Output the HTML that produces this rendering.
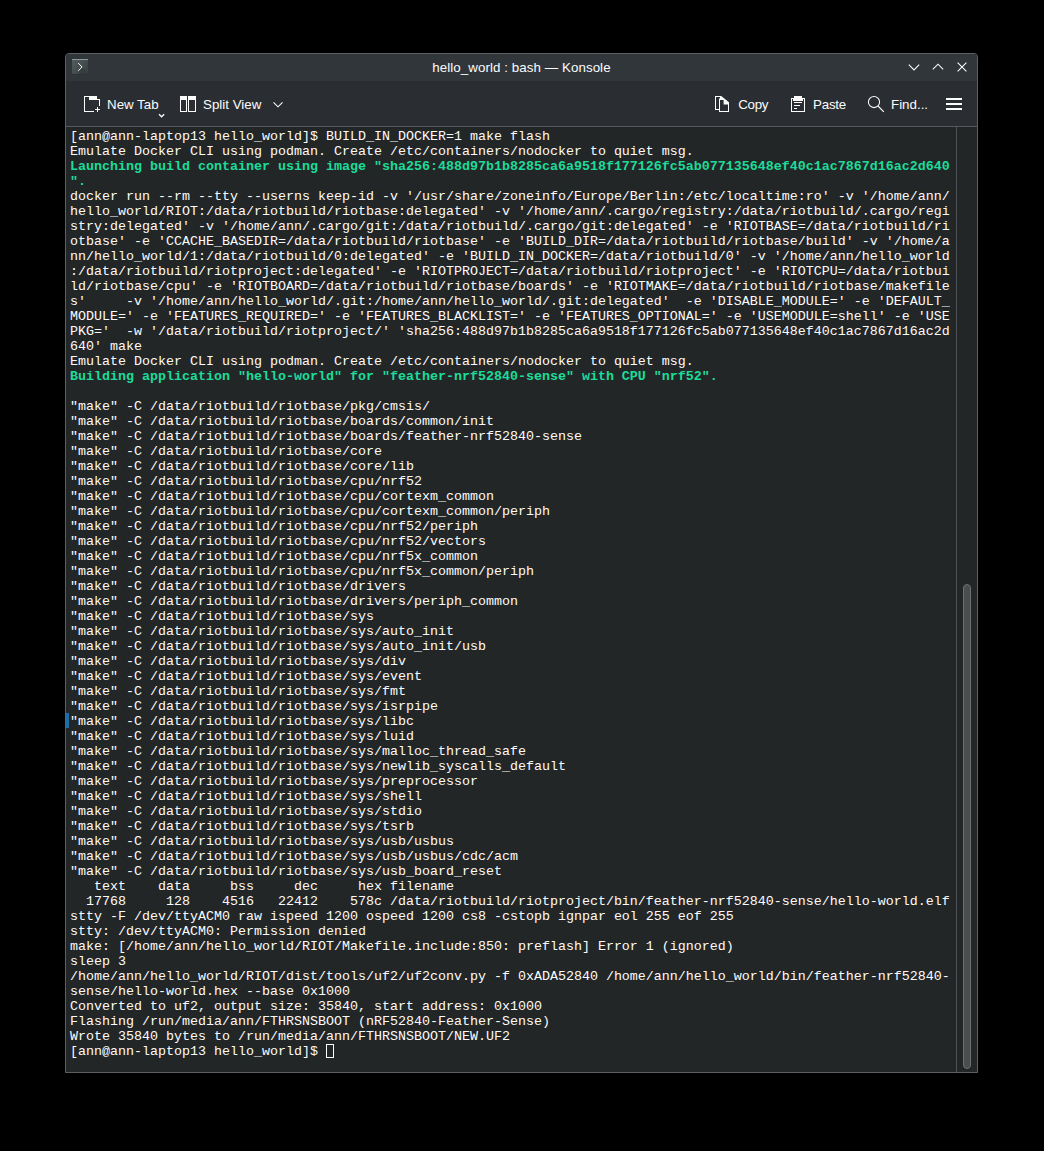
<!DOCTYPE html>
<html><head><meta charset="utf-8"><title>hello_world : bash — Konsole</title>
<style>
html,body{margin:0;padding:0;background:#000;}
body{width:1044px;height:1151px;position:relative;overflow:hidden;font-family:"Liberation Sans",sans-serif;}
#win{position:absolute;left:65px;top:53px;width:911px;height:1018px;border:1px solid #5c6064;border-radius:4px 4px 0 0;background:#232627;overflow:hidden;}
#tb{position:absolute;left:0;top:0;width:911px;height:27px;background:#31363b;}
#tool{position:absolute;left:0;top:27px;width:911px;height:45px;background:#2a2e32;border-bottom:1px solid #565a5e;}
.lbl{position:absolute;color:#fcfcfc;font-size:13.33px;line-height:16px;white-space:pre;}
#title{left:0;width:911px;text-align:center;top:6px;letter-spacing:0.07px;}
#term{position:absolute;left:4px;top:75px;margin:0;font-family:"Liberation Mono",monospace;font-size:13.333px;line-height:15px;color:#fcfcfc;white-space:pre;}
#term b{color:#1cdc9a;font-weight:bold;}
#sbline{position:absolute;left:890px;top:73px;width:1px;height:945px;background:#4f5357;}
#thumb{position:absolute;left:897px;top:530px;width:6px;height:483px;border:1px solid #6d7073;background:#4b4d4f;border-radius:4px;}
#mark{position:absolute;left:0;top:659px;width:3px;height:15px;background:#1e6da6;}
#cur{position:absolute;left:260px;top:990px;width:6px;height:12px;border:1px solid #fcfcfc;}
svg{position:absolute;overflow:visible;}
</style></head><body>
<div id="win">
 <div id="tb">
  <div class="lbl" id="title">hello_world : bash — Konsole</div>
 </div>
 <div id="tool">
  <div class="lbl" id="l1" style="left:41px;top:16px;">New Tab</div>
  <div class="lbl" id="l2" style="left:137px;top:16px;">Split View</div>
  <div class="lbl" id="l3" style="left:672.3px;top:16px;letter-spacing:-0.3px;">Copy</div>
  <div class="lbl" id="l4" style="left:747px;top:16px;letter-spacing:-0.2px;">Paste</div>
  <div class="lbl" id="l5" style="left:825px;top:16px;">Find...</div>
 </div>
 <pre id="term">[ann@ann-laptop13 hello_world]$ BUILD_IN_DOCKER=1 make flash
Emulate Docker CLI using podman. Create /etc/containers/nodocker to quiet msg.
<b>Launching build container using image "sha256:488d97b1b8285ca6a9518f177126fc5ab077135648ef40c1ac7867d16ac2d640</b>
<b>".</b>
docker run --rm --tty --userns keep-id -v '/usr/share/zoneinfo/Europe/Berlin:/etc/localtime:ro' -v '/home/ann/
hello_world/RIOT:/data/riotbuild/riotbase:delegated' -v '/home/ann/.cargo/registry:/data/riotbuild/.cargo/regi
stry:delegated' -v '/home/ann/.cargo/git:/data/riotbuild/.cargo/git:delegated' -e 'RIOTBASE=/data/riotbuild/ri
otbase' -e 'CCACHE_BASEDIR=/data/riotbuild/riotbase' -e 'BUILD_DIR=/data/riotbuild/riotbase/build' -v '/home/a
nn/hello_world/1:/data/riotbuild/0:delegated' -e 'BUILD_IN_DOCKER=/data/riotbuild/0' -v '/home/ann/hello_world
:/data/riotbuild/riotproject:delegated' -e 'RIOTPROJECT=/data/riotbuild/riotproject' -e 'RIOTCPU=/data/riotbui
ld/riotbase/cpu' -e 'RIOTBOARD=/data/riotbuild/riotbase/boards' -e 'RIOTMAKE=/data/riotbuild/riotbase/makefile
s'     -v '/home/ann/hello_world/.git:/home/ann/hello_world/.git:delegated'  -e 'DISABLE_MODULE=' -e 'DEFAULT_
MODULE=' -e 'FEATURES_REQUIRED=' -e 'FEATURES_BLACKLIST=' -e 'FEATURES_OPTIONAL=' -e 'USEMODULE=shell' -e 'USE
PKG='  -w '/data/riotbuild/riotproject/' 'sha256:488d97b1b8285ca6a9518f177126fc5ab077135648ef40c1ac7867d16ac2d
640' make
Emulate Docker CLI using podman. Create /etc/containers/nodocker to quiet msg.
<b>Building application "hello-world" for "feather-nrf52840-sense" with CPU "nrf52".</b>

"make" -C /data/riotbuild/riotbase/pkg/cmsis/
"make" -C /data/riotbuild/riotbase/boards/common/init
"make" -C /data/riotbuild/riotbase/boards/feather-nrf52840-sense
"make" -C /data/riotbuild/riotbase/core
"make" -C /data/riotbuild/riotbase/core/lib
"make" -C /data/riotbuild/riotbase/cpu/nrf52
"make" -C /data/riotbuild/riotbase/cpu/cortexm_common
"make" -C /data/riotbuild/riotbase/cpu/cortexm_common/periph
"make" -C /data/riotbuild/riotbase/cpu/nrf52/periph
"make" -C /data/riotbuild/riotbase/cpu/nrf52/vectors
"make" -C /data/riotbuild/riotbase/cpu/nrf5x_common
"make" -C /data/riotbuild/riotbase/cpu/nrf5x_common/periph
"make" -C /data/riotbuild/riotbase/drivers
"make" -C /data/riotbuild/riotbase/drivers/periph_common
"make" -C /data/riotbuild/riotbase/sys
"make" -C /data/riotbuild/riotbase/sys/auto_init
"make" -C /data/riotbuild/riotbase/sys/auto_init/usb
"make" -C /data/riotbuild/riotbase/sys/div
"make" -C /data/riotbuild/riotbase/sys/event
"make" -C /data/riotbuild/riotbase/sys/fmt
"make" -C /data/riotbuild/riotbase/sys/isrpipe
"make" -C /data/riotbuild/riotbase/sys/libc
"make" -C /data/riotbuild/riotbase/sys/luid
"make" -C /data/riotbuild/riotbase/sys/malloc_thread_safe
"make" -C /data/riotbuild/riotbase/sys/newlib_syscalls_default
"make" -C /data/riotbuild/riotbase/sys/preprocessor
"make" -C /data/riotbuild/riotbase/sys/shell
"make" -C /data/riotbuild/riotbase/sys/stdio
"make" -C /data/riotbuild/riotbase/sys/tsrb
"make" -C /data/riotbuild/riotbase/sys/usb/usbus
"make" -C /data/riotbuild/riotbase/sys/usb/usbus/cdc/acm
"make" -C /data/riotbuild/riotbase/sys/usb_board_reset
   text    data     bss     dec     hex filename
  17768     128    4516   22412    578c /data/riotbuild/riotproject/bin/feather-nrf52840-sense/hello-world.elf
stty -F /dev/ttyACM0 raw ispeed 1200 ospeed 1200 cs8 -cstopb ignpar eol 255 eof 255
stty: /dev/ttyACM0: Permission denied
make: [/home/ann/hello_world/RIOT/Makefile.include:850: preflash] Error 1 (ignored)
sleep 3
/home/ann/hello_world/RIOT/dist/tools/uf2/uf2conv.py -f 0xADA52840 /home/ann/hello_world/bin/feather-nrf52840-
sense/hello-world.hex --base 0x1000
Converted to uf2, output size: 35840, start address: 0x1000
Flashing /run/media/ann/FTHRSNSBOOT (nRF52840-Feather-Sense)
Wrote 35840 bytes to /run/media/ann/FTHRSNSBOOT/NEW.UF2
[ann@ann-laptop13 hello_world]$ </pre>
 <div id="sbline"></div>
 <div id="thumb"></div>
 <div id="mark"></div>
 <div id="cur"></div>
</div>
<svg id="ico" width="1044" height="1151" viewBox="0 0 1044 1151" style="left:0;top:0;">
 <defs>
  <linearGradient id="kg" x1="0" y1="0" x2="1" y2="1"><stop offset="0" stop-color="#525d5e"/><stop offset="1" stop-color="#363f40"/></linearGradient>
 </defs>
 <!-- konsole app icon -->
 <rect x="72" y="59" width="16" height="16" fill="url(#kg)"/>
 <polygon points="82,67 88,73 88,75 80,75 78,71" fill="#2f3738" opacity="0.55"/>
 <rect x="72" y="59" width="16" height="1" fill="#8c9a9b"/>
 <rect x="72" y="74" width="16" height="1" fill="#2b3233"/>
 <polyline points="78.2,63.1 82.1,67 78.2,70.9" fill="none" stroke="#fcfcfc" stroke-width="1"/>
 <!-- window buttons -->
 <g fill="none" stroke="#fcfcfc" stroke-width="1.05">
  <polyline points="908.8,64.7 914,69.9 919.2,64.7"/>
  <polyline points="932.8,69.4 938,64.2 943.2,69.4"/>
  <path d="M957.6,62.6 L966.4,71.4 M966.4,62.6 L957.6,71.4"/>
 </g>
 <!-- new tab -->
 <g fill="#fcfcfc">
  <rect x="84" y="96" width="1" height="16"/>
  <rect x="84" y="96" width="13" height="1"/>
  <rect x="84" y="111" width="10" height="1"/>
  <rect x="89" y="96" width="8" height="4"/>
  <rect x="97" y="99" width="3" height="1"/>
  <rect x="99" y="99" width="1" height="7"/>
  <rect x="95" y="109" width="5" height="1"/>
  <rect x="97" y="107" width="1" height="5"/>
 </g>
 <polyline points="159,114.2 161.6,116.8 164.2,114.2" fill="none" stroke="#fcfcfc" stroke-width="1.25"/>
 <!-- split view -->
 <path fill="#fcfcfc" fill-rule="evenodd" d="M180,96H187V112H180Z M181,100H186V111H181Z M188,96H196V112H188Z M189,100H195V111H189Z"/>
 <polyline points="273.5,102.3 278,106.8 282.5,102.3" fill="none" stroke="#fcfcfc" stroke-width="1.1"/>
 <!-- copy -->
 <path fill="#fcfcfc" fill-rule="evenodd" d="M715,96H721.2L729,102.3V112H719V110H715Z M716,97H720V98.5H719V109H716Z M720,100H723.6V104.6H728V111H720Z"/>
 <!-- paste -->
 <path fill="#fcfcfc" fill-rule="evenodd" d="M791,98H794V96H802V98H805V112H791Z M792,99H793V101H803V99H804V111H792Z"/>
 <g fill="#fcfcfc"><rect x="794" y="102" width="8" height="1"/><rect x="794" y="105" width="6" height="1"/><rect x="794" y="108" width="3" height="1"/></g>
 <!-- find -->
 <circle cx="874" cy="102" r="5.6" fill="none" stroke="#fcfcfc" stroke-width="1.05"/>
 <line x1="878" y1="106" x2="883.8" y2="111.8" stroke="#fcfcfc" stroke-width="1.15"/>
 <!-- hamburger -->
 <g fill="#fcfcfc"><rect x="946" y="98" width="16" height="2"/><rect x="946" y="103" width="16" height="2"/><rect x="946" y="108" width="16" height="2"/></g>
</svg>
</body></html>
